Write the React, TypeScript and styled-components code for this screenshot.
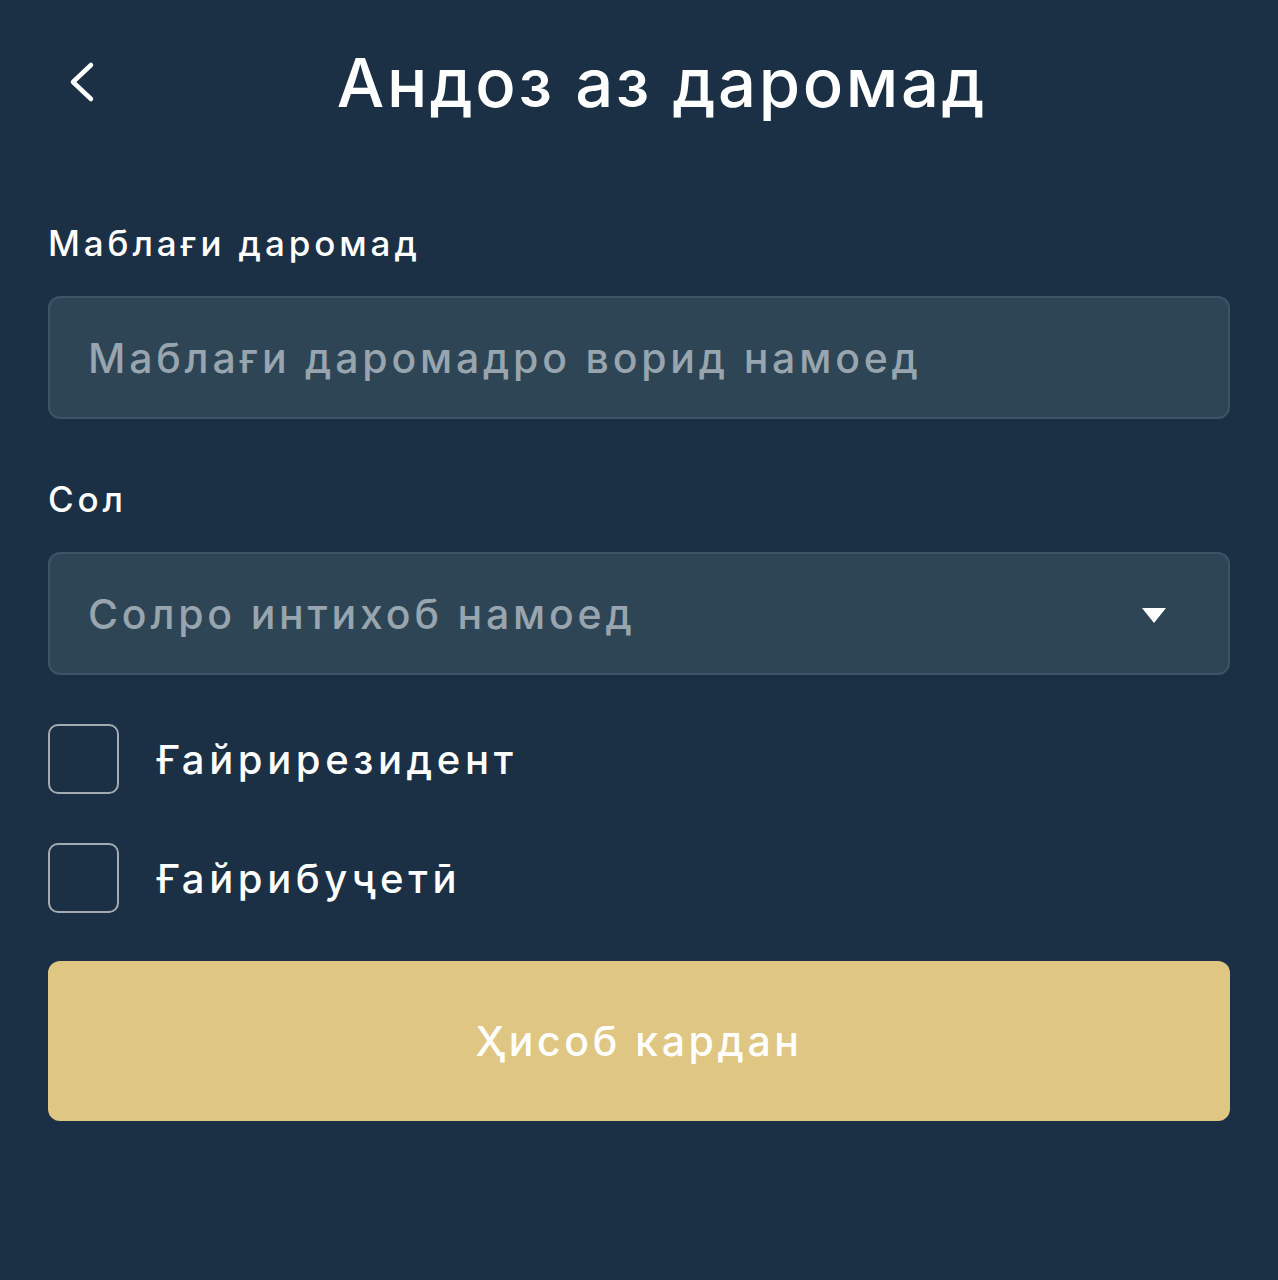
import React from "react";
import styled, { createGlobalStyle } from "styled-components";

const Global = createGlobalStyle`
  html, body { margin: 0; padding: 0; background: #1b3044; }
  body { font-family: Inter, "Noto Sans", sans-serif; }
  * { box-sizing: border-box; }
`;

const Page = styled.div`
  width: 1278px;
  min-height: 1280px;
  background: #1b3044;
  padding: 0 48px;
  color: #ffffff;
`;

const Header = styled.header`
  height: 164px;
  display: grid;
  grid-template-columns: 80px 1fr 34px;
  align-items: center;
`;

const BackButton = styled.button`
  width: 60px;
  height: 60px;
  background: none;
  border: none;
  padding: 0;
  margin-left: 4px;
  display: flex;
  align-items: center;
  justify-content: center;
  color: #fff;
  cursor: pointer;
`;

const Title = styled.h1`
  margin: 0;
  text-align: center;
  font-size: 67px;
  font-weight: 500;
  letter-spacing: 2.6px;
  color: #fff;
`;

const Form = styled.div`
  display: flex;
  flex-direction: column;
`;

const Label = styled.div<{ $top: number }>`
  margin-top: ${(p) => p.$top}px;
  height: 44px;
  line-height: 44px;
  font-size: 35px;
  font-weight: 500;
  letter-spacing: 3.9px;
  color: #fff;
`;

const Field = styled.div`
  margin-top: 31px;
  height: 123px;
  border: 2px solid #3c5466;
  border-radius: 12px;
  background: #2e4556;
  display: flex;
  align-items: center;
  justify-content: space-between;
  padding: 0 62px 0 38px;
  font-size: 41px;
  font-weight: 500;
  letter-spacing: 3.8px;
  color: #98a5af;
`;

const Caret = styled.div`
  width: 0;
  height: 0;
  border-left: 12px solid transparent;
  border-right: 12px solid transparent;
  border-top: 15px solid #ffffff;
  margin-top: 4px;
`;

const CheckRow = styled.label<{ $top: number }>`
  margin-top: ${(p) => p.$top}px;
  display: flex;
  align-items: center;
  gap: 38px;
  height: 70px;
  font-size: 40px;
  font-weight: 500;
  letter-spacing: 4.6px;
  color: #fff;
`;

const Box = styled.span`
  width: 71px;
  height: 70px;
  border: 2px solid #a3abb2;
  border-radius: 10px;
  flex: none;
`;

const Submit = styled.button`
  margin-top: 48px;
  height: 160px;
  width: 100%;
  border: none;
  border-radius: 12px;
  background: #dfc683;
  color: #ffffff;
  font-family: inherit;
  font-size: 41px;
  font-weight: 500;
  letter-spacing: 3.6px;
  cursor: pointer;
`;

export default function App() {
  return (
    <>
      <Global />
      <Page>
        <Header>
          <BackButton aria-label="back">
            <svg width="30" height="44" viewBox="0 0 30 44" fill="none">
              <path d="M24 5 L6 22 L24 39" stroke="#fff" strokeWidth="4.5" strokeLinecap="round" strokeLinejoin="round" />
            </svg>
          </BackButton>
          <Title>Андоз аз даромад</Title>
          <span />
        </Header>
        <Form>
          <Label $top={57}>Маблағи даромад</Label>
          <Field>Маблағи даромадро ворид намоед</Field>
          <Label $top={58}>Сол</Label>
          <Field>
            <span>Солро интихоб намоед</span>
            <Caret />
          </Field>
          <CheckRow $top={49}>
            <Box />
            Ғайрирезидент
          </CheckRow>
          <CheckRow $top={49}>
            <Box />
            Ғайрибуҷетӣ
          </CheckRow>
          <Submit>Ҳисоб кардан</Submit>
        </Form>
      </Page>
    </>
  );
}
